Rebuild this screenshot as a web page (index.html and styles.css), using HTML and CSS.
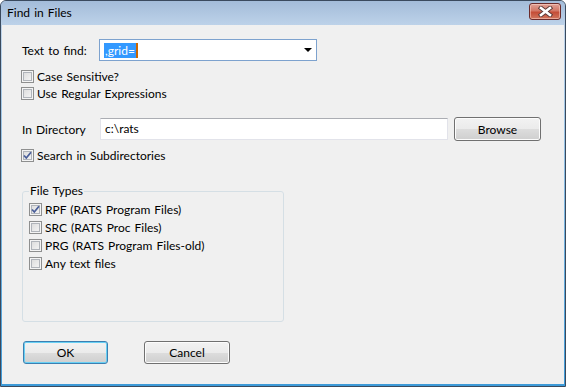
FILE: index.html
```html
<!DOCTYPE html>
<html lang="en">
  <head>
    <meta charset="UTF-8" />
    <title>Find in Files</title>
    <link rel="stylesheet" href="styles.css">
  </head>

  <body>
    <div class="window">
      <div class="titlebar">
        <span class="title">Find in Files</span>
        <button class="close-btn">
          <svg width="15" height="11" viewBox="0 0 15 11">
            <path d="M3 2 L12 9 M12 2 L3 9" stroke="#5a3a38" stroke-width="4.4" stroke-linecap="square" />
            <path d="M3 2 L12 9 M12 2 L3 9" stroke="#fff" stroke-width="2.6" stroke-linecap="square" />
          </svg>
        </button>
      </div>

      <div class="client">
        <div class="row find-row">
          <label class="label find-label">Text to find:</label>
          <div class="combo">
            <span class="selected">,grid=</span><span class="caret"></span>
            <span class="arrow"></span>
          </div>
        </div>

        <div class="check first-check">
          <span class="box"></span>Case Sensitive?
        </div>
        <div class="check">
          <span class="box"></span>Use Regular Expressions
        </div>

        <div class="row dir-row">
          <label class="label dir-label">In Directory</label>
          <div class="textbox">c:\rats</div>
          <button class="button browse">Browse</button>
        </div>

        <div class="check subdir-check">
          <span class="box checked">
            <svg width="9" height="9" viewBox="0 0 9 9"><path d="M1 4.5 L3.3 7 L8 1.3" fill="none" stroke="#4a5f9a" stroke-width="1.8" /></svg>
          </span>Search in Subdirectories
        </div>

        <fieldset class="group">
          <legend>File Types</legend>
          <div class="check group-first">
            <span class="box checked">
              <svg width="9" height="9" viewBox="0 0 9 9"><path d="M1 4.5 L3.3 7 L8 1.3" fill="none" stroke="#4a5f9a" stroke-width="1.8" /></svg>
            </span>RPF (RATS Program Files)
          </div>
          <div class="check group-check"><span class="box"></span>SRC (RATS Proc Files)</div>
          <div class="check group-check"><span class="box"></span>PRG (RATS Program Files-old)</div>
          <div class="check group-check"><span class="box"></span>Any text files</div>
        </fieldset>

        <div class="row buttons">
          <button class="button ok">OK</button>
          <button class="button cancel">Cancel</button>
        </div>
      </div>
    </div>
  </body>
</html>
```

FILE: styles.css
```css
body {
  margin: 0;
  padding: 0;
  width: 566px;
  height: 387px;
  overflow: hidden;
  background-color: #fff;
  font-family: "Segoe UI", Lato, sans-serif;
  font-size: 12px;
  word-spacing: 1px;
  color: #000;
}

.window {
  width: 566px;
  height: 387px;
  box-sizing: border-box;
  border: 1px solid #3a4a5e;
  border-radius: 6px 6px 0 0;
  background: linear-gradient(#a6bfdc 0, #bfd4ea 30px, #3d9ad8 100%);
  display: flex;
  flex-direction: column;
  overflow: hidden;
}

.titlebar {
  height: 24px;
  flex: none;
  display: flex;
  align-items: center;
  justify-content: space-between;
  padding: 0 4px 0 6px;
  background: linear-gradient(#a3bcd9, #bdd2e9);
}

.title {
  font-size: 12px;
  color: #000;
  margin-top: -2px;
}

.close-btn {
  width: 32px;
  height: 17px;
  margin-top: -3px;
  padding: 0;
  border: 1px solid #6b2b2b;
  border-radius: 3px;
  background: linear-gradient(#e0a196 0, #d27766 45%, #c44d37 55%, #d0765e 100%);
  box-shadow: inset 0 0 0 1px rgba(255, 220, 210, 0.5);
  display: flex;
  align-items: center;
  justify-content: center;
}

.client {
  flex: 1;
  margin: 0 1px 2px 1px;
  background-color: #f0f0f0;
  padding: 14px 0 0 20px;
  display: flex;
  flex-direction: column;
  align-items: flex-start;
}

.row {
  display: flex;
  align-items: center;
}

.find-row {
  height: 22px;
}

.label {
  flex: none;
}

.find-label {
  width: 77px;
}

.combo {
  width: 218px;
  height: 22px;
  box-sizing: border-box;
  border: 1px solid #7da2ce;
  background-color: #fff;
  display: flex;
  align-items: center;
  padding-left: 4px;
  position: relative;
}

.selected {
  background-color: #3399ff;
  color: #fff;
  padding: 0 1px;
  line-height: 15px;
}

.caret {
  width: 2px;
  height: 15px;
  background-color: #cc6600;
}

.arrow {
  position: absolute;
  right: 4px;
  top: 8px;
  border-left: 4px solid transparent;
  border-right: 4px solid transparent;
  border-top: 4px solid #000;
}

.check {
  height: 17px;
  display: flex;
  align-items: center;
  margin-left: -1px;
}

.first-check {
  margin-top: 7px;
}

.box {
  width: 13px;
  height: 13px;
  box-sizing: border-box;
  border: 1px solid #8e8f8f;
  background: linear-gradient(135deg, #d8d8d8, #f8f8f8);
  box-shadow: inset 0 0 0 1px #f4f4f4, inset 0 0 0 2px #b0b4ba;
  margin-right: 3px;
  display: flex;
  align-items: center;
  justify-content: center;
  flex: none;
}

.box.checked svg {
  display: block;
}

.dir-row {
  margin-top: 15px;
  height: 24px;
}

.dir-label {
  width: 78px;
}

.textbox {
  width: 348px;
  height: 22px;
  box-sizing: border-box;
  border: 1px solid #e2e3ea;
  border-top-color: #abadb3;
  background-color: #fff;
  padding-left: 4px;
  line-height: 20px;
}

.button {
  height: 24px;
  box-sizing: border-box;
  border: 1px solid #707070;
  border-radius: 3px;
  background: linear-gradient(#f2f2f2 0, #ebebeb 50%, #dddddd 50%, #cfcfcf 100%);
  box-shadow: inset 0 0 0 1px #fcfcfc;
  font-family: inherit;
  font-size: 12px;
  color: #000;
  padding: 0;
}

.browse {
  width: 87px;
  margin-left: 6px;
}

.subdir-check {
  margin-top: 6px;
}

.group {
  margin: 20px 0 0 0;
  width: 262px;
  height: 138px;
  box-sizing: border-box;
  border: 1px solid #d5dfe5;
  border-radius: 3px;
  padding: 0 0 0 6px;
}

.group legend {
  padding: 0 1px;
  line-height: 14px;
}

.group .check {
  margin-left: 0;
}

.group-first {
  margin-top: 2px;
  height: 18px;
}

.group-check {
  height: 18px;
}

.buttons {
  margin-top: 19px;
  margin-left: 1px;
  gap: 36px;
}

.ok {
  width: 85px;
  height: 23px;
  border-color: #3c7fb1;
  box-shadow: inset 0 0 0 1px #68d0f4;
}

.cancel {
  width: 86px;
  height: 23px;
}
```
